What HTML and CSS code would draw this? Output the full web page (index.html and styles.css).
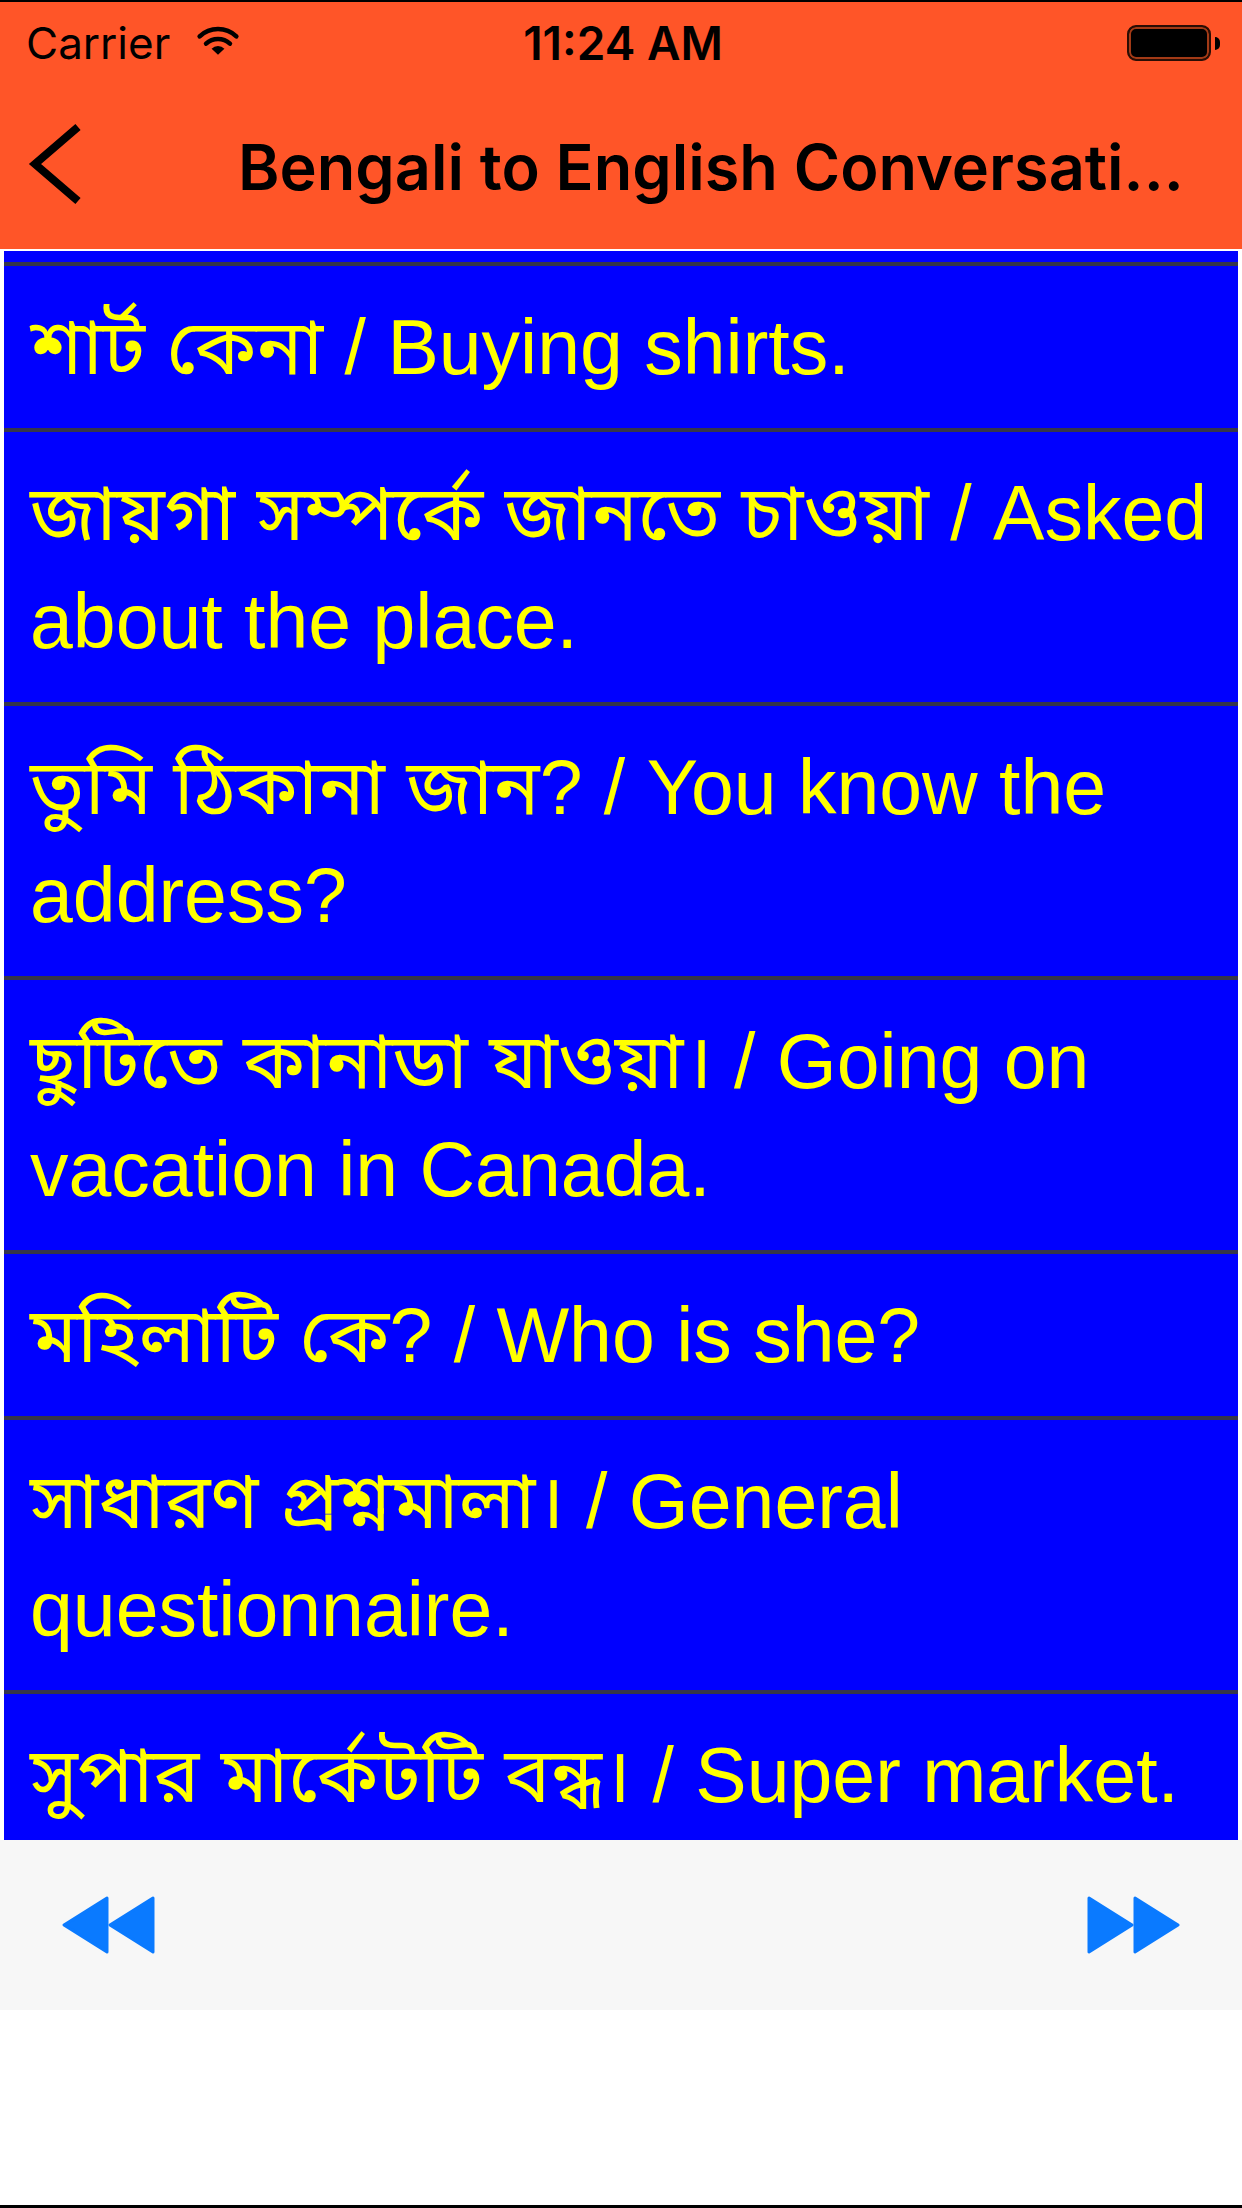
FILE: index.html
```html
<!DOCTYPE html>
<html lang="bn">

<head>
    <meta charset="UTF-8">
    <meta name="viewport" content="width=device-width, initial-scale=1.0">
    <title>Bengali to English Conversation</title>
    <link rel="stylesheet" href="styles.css">
</head>

<body>
    <div class="screen">
        <header class="topbar">
            <div class="status">
                <div class="status-left">
                    <span>Carrier</span>
                    <svg class="wifi" width="44" height="34" viewBox="0 0 48 34">
                        <path d="M4 13 A29 29 0 0 1 44 13" fill="none" stroke="#000" stroke-width="5" stroke-linecap="round" />
                        <path d="M11 21 A19 19 0 0 1 37 21" fill="none" stroke="#000" stroke-width="5" stroke-linecap="round" />
                        <path d="M24 33 L17 26.5 A9.5 9.5 0 0 1 31 26.5 Z" fill="#000" />
                    </svg>
                </div>
                <span class="time">11:24 AM</span>
                <div class="status-right">
                    <span class="battery"></span>
                    <span class="battery-tip"></span>
                </div>
            </div>
            <nav class="navbar">
                <svg class="back" width="56" height="82" viewBox="0 0 56 82">
                    <polyline points="50,4 7,41 50,78" fill="none" stroke="#000" stroke-width="8" stroke-linejoin="miter" />
                </svg>
                <h1 class="title">Bengali to English Conversati...</h1>
            </nav>
        </header>

        <ul class="list">
            <li>শার্ট কেনা / Buying shirts.</li>
            <li>জায়গা সম্পর্কে জানতে চাওয়া / Asked<br>about the place.</li>
            <li>তুমি ঠিকানা জান? / You know the<br>address?</li>
            <li>ছুটিতে কানাডা যাওয়া। / Going on<br>vacation in Canada.</li>
            <li>মহিলাটি কে? / Who is she?</li>
            <li>সাধারণ প্রশ্নমালা। / General<br>questionnaire.</li>
            <li>সুপার মার্কেটটি বন্ধ। / Super market.</li>
        </ul>

        <footer class="toolbar">
            <svg class="arrows" width="94" height="58" viewBox="0 0 94 58">
                <polygon points="2,29 45,2 45,56" />
                <polygon points="48,29 91,2 91,56" />
            </svg>
            <svg class="arrows" width="94" height="58" viewBox="0 0 94 58">
                <polygon points="3,2 46,29 3,56" />
                <polygon points="49,2 92,29 49,56" />
            </svg>
        </footer>
    </div>
</body>

</html>
```

FILE: styles.css
```css
body {
    margin: 0;
    background: #fff;
}

.screen {
    width: 1242px;
    height: 2208px;
    box-sizing: border-box;
    border-top: 2px solid #000;
    border-bottom: 3px solid #000;
    display: flex;
    flex-direction: column;
    overflow: hidden;
}

.topbar {
    background: #ff5528;
    height: 247px;
    display: flex;
    flex-direction: column;
}

.status {
    height: 82px;
    padding: 0 22px 0 26px;
    display: grid;
    grid-template-columns: 1fr auto 1fr;
    align-items: center;
    font-family: "Inter", "Liberation Sans", sans-serif;
    font-size: 44px;
    color: #000;
}

.status-left {
    display: flex;
    align-items: center;
    gap: 26px;
}

.wifi {
    margin-top: -6px;
}

.time {
    font-size: 46px;
    font-weight: 600;
}

.status-right {
    display: flex;
    align-items: center;
    justify-content: flex-end;
}

.battery {
    width: 84px;
    height: 36px;
    box-sizing: border-box;
    background: #000;
    border: 2px solid #2a0d04;
    border-radius: 9px;
    box-shadow: inset 0 0 0 2px #a23a16;
}

.battery-tip {
    width: 5px;
    height: 13px;
    margin-left: 4px;
    background: #000;
    border-radius: 0 6px 6px 0;
}

.navbar {
    flex: 1;
    display: flex;
    align-items: center;
    padding-left: 28px;
}

.back {
    flex: none;
    margin-top: -6px;
}

.title {
    margin: 0 0 0 154px;
    font-family: "Inter", "Liberation Sans", sans-serif;
    font-size: 63px;
    font-weight: 600;
    color: #000;
    white-space: nowrap;
}

.list {
    list-style: none;
    margin: 2px 4px 0;
    padding: 11px 0 0;
    height: 1589px;
    box-sizing: border-box;
    background: #0000ff;
    overflow: hidden;
}

.list li {
    border-top: 4px solid #35354a;
    padding: 27px 0 27px 26px;
    line-height: 108px;
    font-family: "Liberation Sans", "Noto Sans Bengali", "Noto Sans Bengali UI", "Lohit Bengali", "FreeSans", "FreeSerif", sans-serif;
    font-size: 77px;
    color: #ffff00;
    white-space: nowrap;
}

.toolbar {
    height: 170px;
    flex: none;
    background: #f7f7f7;
    display: flex;
    align-items: center;
    justify-content: space-between;
    padding: 0 62px;
}

.arrows {
    fill: #0a7aff;
    stroke: #0a7aff;
    stroke-width: 3;
    stroke-linejoin: round;
}
```
